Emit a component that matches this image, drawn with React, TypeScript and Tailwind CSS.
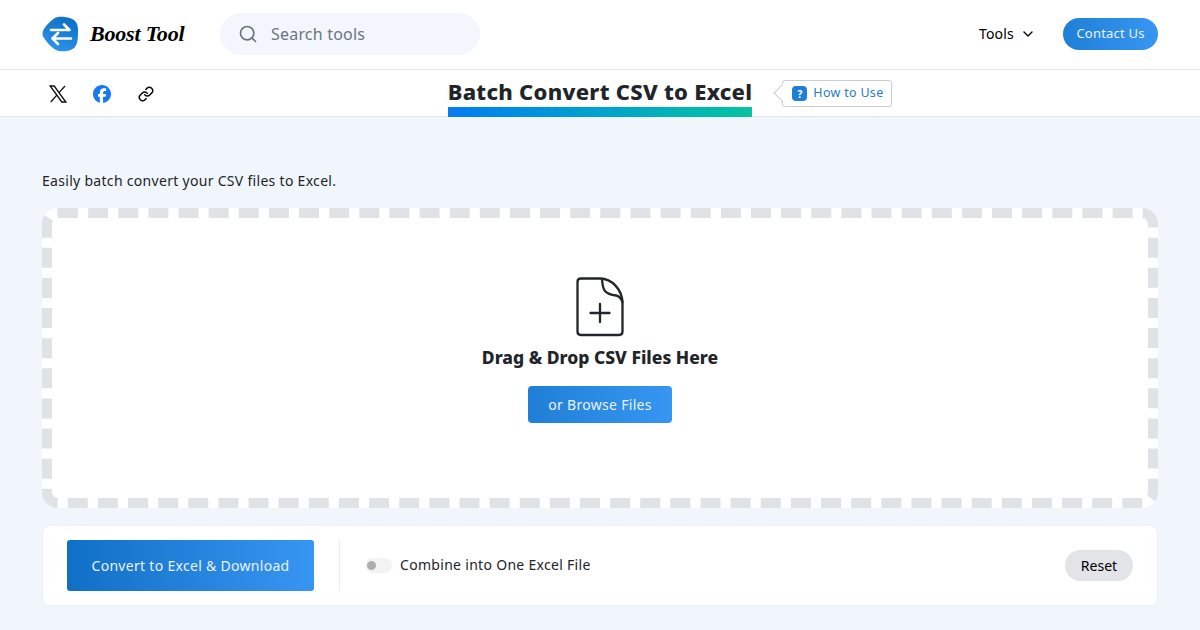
import { ChevronDown, Link, Search } from 'lucide-react';
import { FaFacebook } from 'react-icons/fa6';

function Logo() {
  return (
    <svg width="36" height="36" viewBox="0 0 36 36" className="flex-shrink-0">
      <defs>
        <linearGradient id="logoFill" x1="0.7" y1="0" x2="0.3" y2="1">
          <stop offset="0" stopColor="#0b6fc6" />
          <stop offset="1" stopColor="#2f94ea" />
        </linearGradient>
      </defs>
      <path
        d="M14 1.500C17 0 24 0.500 29 2.500C34 4.500 36 8 36 14C36 21 36 27 33 31C29 35.500 22 35.500 17 35C12 34 6 28 2 22C0 19.500 0 16 2 13C5 8 10 3.500 14 1.500Z"
        fill="url(#logoFill)"
      />
      <path d="M9 14H27.500M22 8.500L27.500 14" stroke="#fff" strokeWidth="2.600" fill="none" strokeLinecap="round" strokeLinejoin="round" />
      <path d="M29 22.500H10.500M16 17L10.500 22.500L16 28" stroke="#fff" strokeWidth="2.600" fill="none" strokeLinecap="round" strokeLinejoin="round" />
    </svg>
  );
}

function XIcon() {
  return (
    <svg width="18" height="18" viewBox="0 0 18 18" fill="none" stroke="#111" strokeWidth="1.300">
      <path d="M1.200 1H5.200L16.800 17H12.800Z" />
      <path d="M16 1L10 7.600M8 9.900L1.800 17" />
    </svg>
  );
}

function FileAddIcon() {
  return (
    <svg width="48" height="60" viewBox="0 0 48 60" fill="none" stroke="#222529" strokeWidth="2.300" strokeLinejoin="round" strokeLinecap="round">
      <path d="M5 1.500H24C36 1.500 46.500 13 46.500 26V54.500C46.500 56.500 45 58 43 58H5C3 58 1.500 56.500 1.500 54.500V5C1.500 3 3 1.500 5 1.500Z" />
      <path d="M26 2C26.500 7 26.500 11 29 14C31.500 17 36 18 40 18.500C43 19 45 21 46.500 25" />
      <path d="M24 27V45M14.500 36H33.500" />
    </svg>
  );
}

export default function App() {
  return (
    <div className="w-[1200px] h-[630px] overflow-hidden bg-[#f1f6fc] text-[#212529] font-['Noto_Sans',sans-serif]">
      <header className="h-[70px] bg-white border-b border-[#e2e4e7] flex items-center justify-between pl-[42px] pr-[42px] pb-px">
        <div className="flex items-center">
          <Logo />
          <span className="ml-[12px] w-[96px] text-[22px] tracking-[-0.2px] leading-none font-bold italic text-black font-['Liberation_Serif',serif] whitespace-nowrap">
            Boost Tool
          </span>
          <div className="ml-[34px] w-[260px] h-[42px] rounded-full bg-[#f3f7fd] flex items-center pl-[18px]">
            <Search className="h-5 w-5 text-[#6c757d]" strokeWidth={2} />
            <span className="ml-[13px] text-base tracking-[0.2px] text-[#6c757d]">Search tools</span>
          </div>
        </div>
        <div className="flex items-center">
          <span className="text-sm tracking-[0.2px] text-black">Tools</span>
          <ChevronDown className="ml-[6px] h-[16px] w-[16px] text-black" strokeWidth={2} />
          <button className="ml-[27px] h-[32px] w-[95px] rounded-full text-[13px] tracking-[0.2px] text-[#e8f3ff] bg-gradient-to-r from-[#1f7fd6] to-[#3796f2]">
            Contact Us
          </button>
        </div>
      </header>

      <div className="h-[47px] bg-white border-b border-[#e2e4e7] grid grid-cols-[1fr_auto_1fr]">
        <div className="flex items-center pl-[49px] h-[48px]">
          <XIcon />
          <FaFacebook className="ml-[26px] h-[18px] w-[18px] text-[#1877f2]" />
          <Link className="ml-[27px] h-[16px] w-[16px] text-black" strokeWidth={2.2} />
        </div>
        <div className="flex flex-col items-center">
          <h1 className="h-[37px] pt-[6px] text-[22px] leading-[30px] font-extrabold tracking-[0.28px] text-[#212529] whitespace-nowrap">
            Batch Convert CSV to Excel
          </h1>
          <div className="h-[10px] w-full bg-gradient-to-r from-[#0a7bf2] to-[#0cc3a0]" />
        </div>
        <div className="flex items-start pl-[30px] pt-[10px]">
          <div className="relative h-[27px] w-[110px] rounded-[3px] border border-[#c9ced3] bg-white flex items-center pl-[9px]">
            <span className="absolute left-[-7px] top-[6px] h-[12px] w-[12px] rotate-45 border-l border-b border-[#c9ced3] bg-white" />
            <span className="relative flex items-center justify-center h-[15px] w-[15px] rounded-[4px] bg-[#1f7fd6] text-[10px] font-bold text-white leading-none">?</span>
            <span className="ml-[6px] text-[12.500px] tracking-[0.3px] text-[#2a7ac4] whitespace-nowrap">How to Use</span>
          </div>
        </div>
      </div>

      <main className="px-[42px] pt-[54px] tracking-[0.3px]">
        <p className="text-sm leading-5 text-[#212529]">Easily batch convert your CSV files to Excel.</p>
        <div className="mt-[17px] h-[300px] rounded-[16px] border-[10px] border-dashed border-[#e0e3e6] bg-white flex flex-col items-center pt-[59px]">
          <FileAddIcon />
          <h2 className="mt-[6px] text-[17.500px] leading-7 font-extrabold tracking-normal text-[#212529]">Drag &amp; Drop CSV Files Here</h2>
          <button className="mt-[15px] h-[37px] w-[144px] rounded-[4px] text-sm text-[#e8f3ff] bg-gradient-to-r from-[#1f7fd6] to-[#3796f2]">
            or Browse Files
          </button>
        </div>

        <div className="mt-[17px] h-[81px] rounded-[8px] border border-[#eef1f5] bg-white flex items-center pl-[24px] pr-[24px]">
          <button className="h-[51px] w-[247px] rounded-[3px] text-sm text-[#e8f3ff] bg-gradient-to-r from-[#0f6fc6] to-[#3796f2]">
            Convert to Excel &amp; Download
          </button>
          <div className="ml-[25px] h-[51px] w-px bg-[#e9ecef]" />
          <div className="ml-[25px] relative h-[15px] w-[27px] rounded-full bg-[#f3f3f3]">
            <span className="absolute left-[2px] top-[3px] h-[9px] w-[9px] rounded-full bg-[#adadad]" />
          </div>
          <span className="ml-[8px] pb-[2px] text-sm text-[#212529]">Combine into One Excel File</span>
          <button className="ml-auto h-[31px] w-[68px] rounded-full bg-[#e2e4e8] text-sm tracking-normal text-black">Reset</button>
        </div>
      </main>
    </div>
  );
}
